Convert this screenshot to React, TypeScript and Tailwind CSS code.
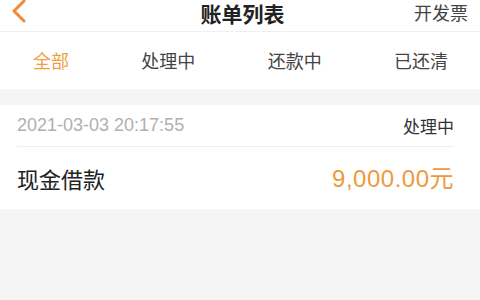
const font = { fontFamily: '"Noto Sans CJK SC", "Liberation Sans", sans-serif' };
const latin = { fontFamily: '"Liberation Sans", sans-serif' };

const tabs = ["全部", "处理中", "还款中", "已还清"];

export default function App() {
  return (
    <div className="h-[300px] w-[480px] overflow-hidden bg-[#f5f5f5]" style={font}>
      <div className="bg-white">
        <div className="grid h-[32px] grid-cols-[1fr_auto_1fr] items-start border-b border-[#f0f0f0] pl-[11px] pr-[12px] pt-[2px]">
          <svg width="16" height="24" viewBox="0 0 16 24" className="-mt-[2px]">
            <path d="M13 1 L3 11 L13 21" fill="none" stroke="#ee8a3c" strokeWidth="3" strokeLinecap="round" strokeLinejoin="round" />
          </svg>
          <div className="ml-[6px] text-[21px] font-bold leading-[22px] text-[#222]">账单列表</div>
          <div className="mt-[1px] text-right text-[18px] leading-[19px] text-[#444]">开发票</div>
        </div>
        <div className="flex h-[57px] items-center justify-between pl-[33px] pr-[32px] text-[18px]">
          {tabs.map((t, i) => (
            <span key={t} className={i === 0 ? "text-[#eea040]" : "text-[#444]"}>
              {t}
            </span>
          ))}
        </div>
      </div>
      <div className="mt-[16px] bg-white pl-[17px] pr-[26px]">
        <div className="flex h-[42px] items-center justify-between border-b border-[#efefef]">
          <span className="text-[18px] text-[#b0b0b0]" style={latin}>
            2021-03-03 20:17:55
          </span>
          <span className="text-[17px] text-[#333]">处理中</span>
        </div>
        <div className="flex h-[62px] items-center justify-between">
          <span className="text-[22px] text-[#222]">现金借款</span>
          <span className="text-[24px] tracking-[0.5px] text-[#ee9a3c]">
            <span style={latin}>9,000.00</span>元
          </span>
        </div>
      </div>
    </div>
  );
}
